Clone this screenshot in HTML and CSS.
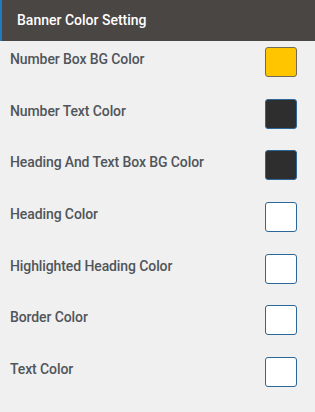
FILE: index.html
```html
<!DOCTYPE html>
<html>
<head>
<meta charset="utf-8">
<link rel="stylesheet" href="styles.css">
</head>
<body>
<div class="panel">
  <div class="panel-header">Banner Color Setting</div>
  <div class="rows">
    <div class="row"><span class="label">Number Box BG Color</span><span class="swatch swatch-yellow"></span></div>
    <div class="row"><span class="label">Number Text Color</span><span class="swatch swatch-dark"></span></div>
    <div class="row"><span class="label">Heading And Text Box BG Color</span><span class="swatch swatch-dark"></span></div>
    <div class="row"><span class="label">Heading Color</span><span class="swatch swatch-white"></span></div>
    <div class="row"><span class="label">Highlighted Heading Color</span><span class="swatch swatch-white"></span></div>
    <div class="row"><span class="label">Border Color</span><span class="swatch swatch-white"></span></div>
    <div class="row"><span class="label">Text Color</span><span class="swatch swatch-white"></span></div>
  </div>
</div>
</body>
</html>
```
FILE: styles.css
```css
html, body {
  margin: 0;
  padding: 0;
  background: #f0f0f0;
  font-family: Roboto, "Liberation Sans", sans-serif;
}
.panel {
  width: 315px;
}
.panel-header {
  height: 41px;
  box-sizing: border-box;
  background: #4a4644;
  border-left: 2px solid #1e7bc2;
  color: #ffffff;
  font-size: 14px;
  font-weight: 500;
  padding-left: 15px;
  display: flex;
  align-items: center;
  padding-bottom: 2px;
}
.rows {
  padding-top: 6px;
}
.row {
  height: 51.67px;
  display: flex;
  justify-content: space-between;
  align-items: flex-start;
  padding: 0 18px 0 10px;
}
.label {
  font-size: 14px;
  font-weight: 500;
  color: #50555a;
  line-height: 24px;
  letter-spacing: -0.1px;
}
.swatch {
  width: 32px;
  height: 30px;
  box-sizing: border-box;
  border: 1px solid #2d6699;
  border-radius: 3px;
}
.swatch-yellow {
  background: #ffc600;
  border-color: #6f6a5a;
}
.swatch-dark {
  background: #2e2e2e;
  border-color: #2d6699;
}
.swatch-white {
  background: #ffffff;
}
```
